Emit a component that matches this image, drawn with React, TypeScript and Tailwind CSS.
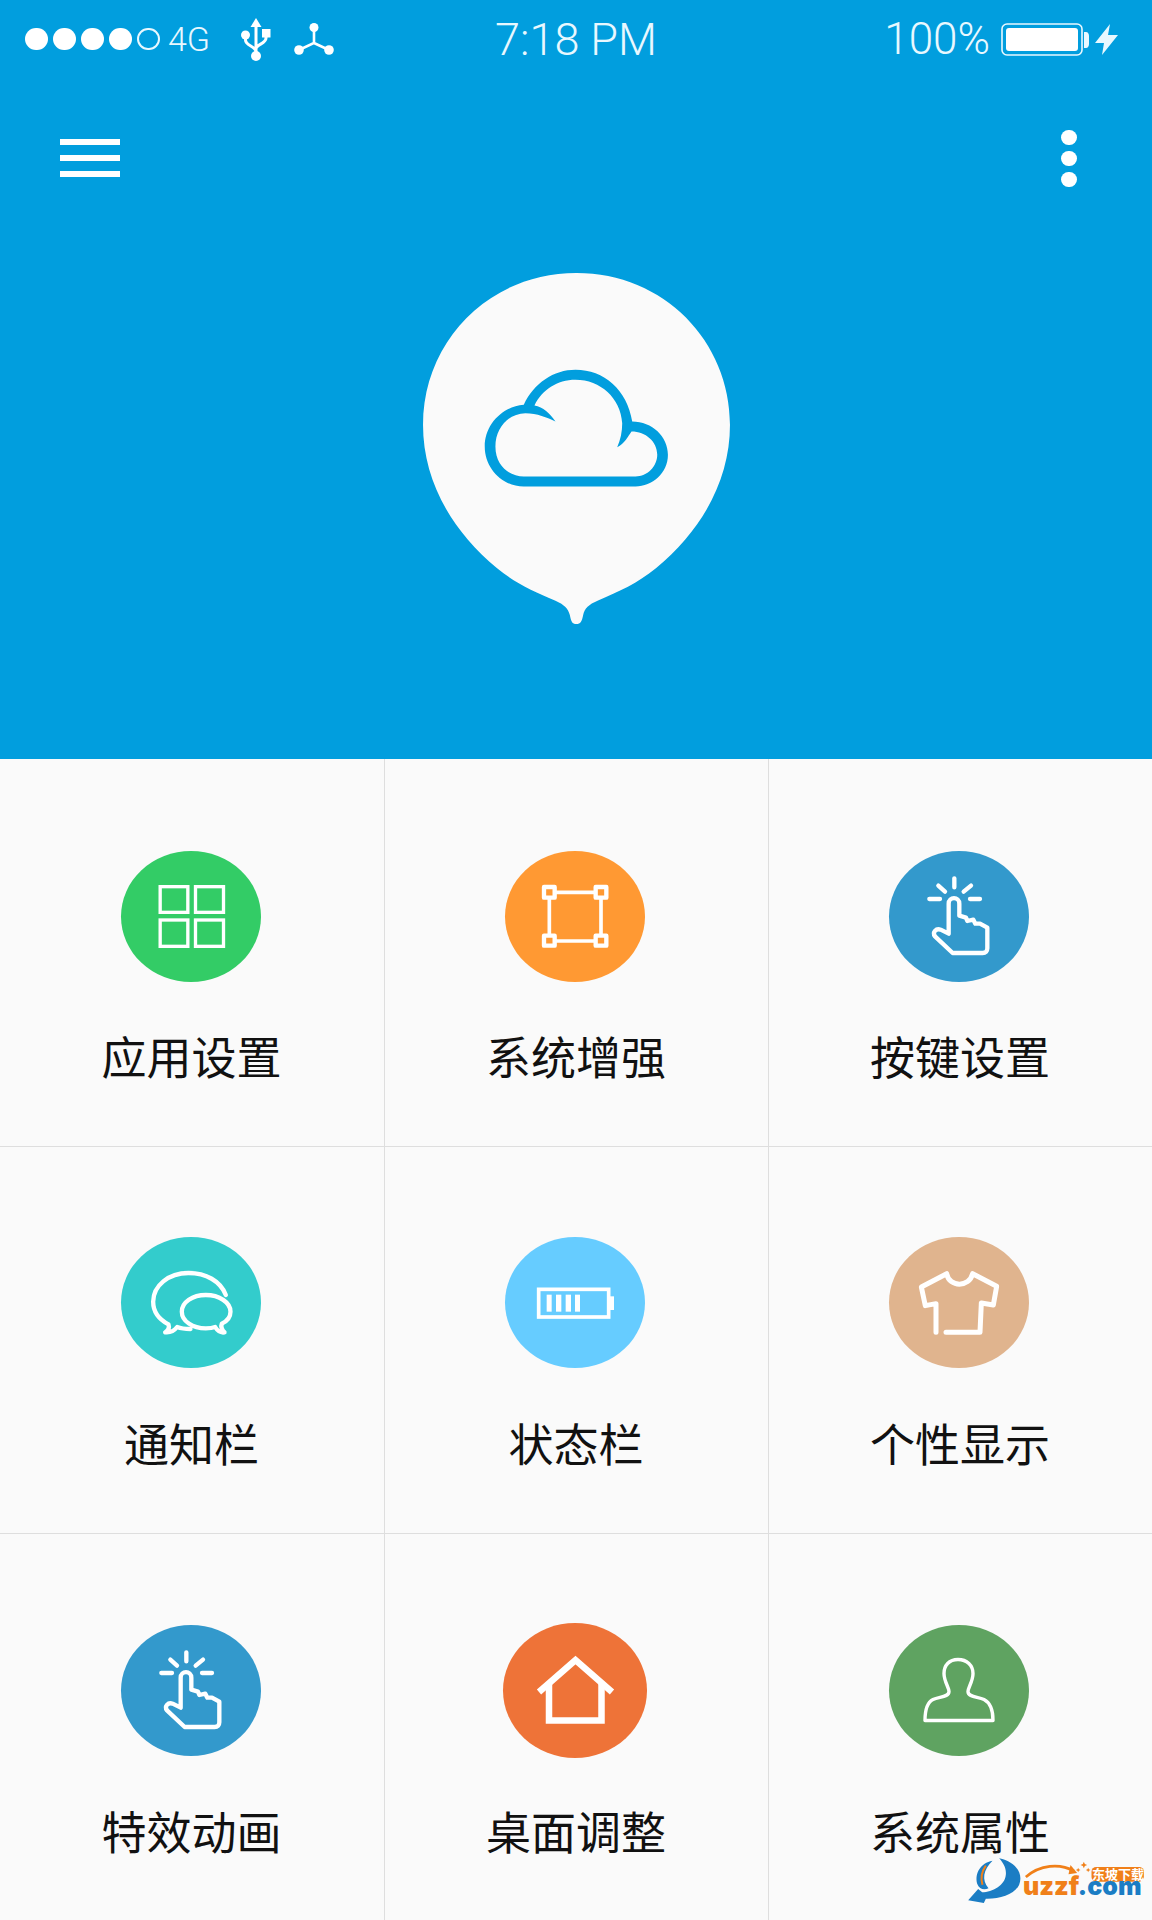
import type { ReactNode } from "react";

const GridIcon = () => (
  <svg viewBox="65 62 417 393" className="h-full w-full" fill="none" stroke="#fff" strokeWidth="10">
    <rect x="181" y="169" width="83" height="77" />
    <rect x="287" y="169" width="84" height="77" />
    <rect x="181" y="269" width="83" height="79" />
    <rect x="287" y="269" width="84" height="79" />
  </svg>
);

const FrameIcon = () => (
  <svg viewBox="45 62 420 393" className="h-full w-full" fill="none" stroke="#fff">
    <path d="M178 186H333V332H178Z" strokeWidth="11" />
    <g fill="#ff9933" strokeWidth="13" strokeLinejoin="round">
      <rect x="162" y="170" width="32" height="32" />
      <rect x="317" y="170" width="32" height="32" />
      <rect x="162" y="316" width="32" height="30" />
      <rect x="317" y="316" width="32" height="30" />
    </g>
  </svg>
);

const TapIcon = () => (
  <svg
    viewBox="57 62 420 393"
    className="h-full w-full"
    fill="none"
    stroke="#fff"
    strokeLinecap="round"
    strokeLinejoin="round"
    strokeWidth="13"
  >
    <path d="M253 144V171M205 166L225 184M303 166L281 184M178 206H210M300 206H330" />
    <path d="M236 310V220C236 198 268 198 268 220V256L288 262L292 272L310 268L316 280L330 280L352 292V354C352 362 347 368 338 368H248L195 318C186 306 198 293 212 298Z" />
  </svg>
);

const ChatIcon = () => (
  <svg
    viewBox="65 52 417 393"
    className="h-full w-full"
    fill="none"
    stroke="#fff"
    strokeLinecap="round"
    strokeLinejoin="round"
    strokeWidth="13"
  >
    <path d="M378 226C362 184 318 160 266 160C206 160 160 198 160 246C160 274 176 298 206 314C210 326 206 332 196 338C212 340 224 332 232 322C242 326 256 328 272 328" />
    <path d="M318 226C278 226 246 248 246 276C246 304 278 326 318 326C328 326 338 325 346 322C352 332 362 340 374 338C366 330 362 322 366 312C382 304 392 290 392 276C392 248 358 226 318 226Z" />
  </svg>
);

const BatteryIcon = () => (
  <svg viewBox="45 52 420 393" className="h-full w-full" fill="#fff">
    <rect x="146" y="209" width="210" height="83" fill="none" stroke="#fff" strokeWidth="11" />
    <rect x="360" y="230" width="12" height="41" />
    <rect x="170" y="225" width="15" height="51" />
    <rect x="198" y="225" width="16" height="51" />
    <rect x="227" y="225" width="16" height="51" />
    <rect x="255" y="225" width="15" height="51" />
  </svg>
);

const ShirtIcon = () => (
  <svg
    viewBox="57 52 420 393"
    className="h-full w-full"
    fill="none"
    stroke="#fff"
    strokeLinecap="round"
    strokeLinejoin="round"
    strokeWidth="15"
  >
    <path d="M198 338V252L166 258L154 202L230 162C238 204 298 204 308 162L380 200L370 256L334 250L330 338H228" />
  </svg>
);

const HomeIcon = () => (
  <svg viewBox="0 0 144 135" className="h-full w-full" fill="none" stroke="#fff" strokeWidth="6.5">
    <path d="M36 69L72.5 37L109 69" />
    <path d="M46 60V97.5H98.5V60" />
  </svg>
);

const PersonIcon = () => (
  <svg viewBox="0 0 140 130" className="h-full w-full" fill="none" stroke="#fff" strokeWidth="3.4" strokeLinejoin="round">
    <path d="M69 34C60 34 55 40 55 48C55 56 60 62 60 66C60 72 50 71 44 74C38 77 36 84 36 95H104C104 84 101 77 95 74C89 71 79 72 79 66C79 62 84 56 84 48C84 40 78 34 69 34Z" />
  </svg>
);

type Item = { label: string; circle: string; icon: ReactNode };

const items: Item[] = [
  { label: "应用设置", circle: "h-[131px] w-[140px] bg-[#33cc66]", icon: <GridIcon /> },
  { label: "系统增强", circle: "h-[131px] w-[140px] bg-[#ff9933]", icon: <FrameIcon /> },
  { label: "按键设置", circle: "h-[131px] w-[140px] bg-[#3399cc]", icon: <TapIcon /> },
  { label: "通知栏", circle: "h-[131px] w-[140px] bg-[#33cccc]", icon: <ChatIcon /> },
  { label: "状态栏", circle: "h-[131px] w-[140px] bg-[#66ccff]", icon: <BatteryIcon /> },
  { label: "个性显示", circle: "h-[131px] w-[140px] bg-[#e0b48e]", icon: <ShirtIcon /> },
  { label: "特效动画", circle: "h-[131px] w-[140px] bg-[#3399cc]", icon: <TapIcon /> },
  { label: "桌面调整", circle: "h-[135px] w-[144px] bg-[#ee7338]", icon: <HomeIcon /> },
  { label: "系统属性", circle: "h-[131px] w-[140px] bg-[#5fa361]", icon: <PersonIcon /> },
];

function StatusBar() {
  return (
    <div className="flex h-[78px] items-center font-['Roboto',sans-serif] font-light text-[#e8f8ff]">
      <div className="flex flex-1 items-center pl-[25px]">
        <div className="flex gap-[5px]">
          <span className="h-[22px] w-[23px] rounded-full bg-white" />
          <span className="h-[22px] w-[23px] rounded-full bg-white" />
          <span className="h-[22px] w-[23px] rounded-full bg-white" />
          <span className="h-[22px] w-[23px] rounded-full bg-white" />
          <span className="h-[22px] w-[23px] rounded-full border-2 border-[#e8f8ff]" />
        </div>
        <span className="ml-[8px] text-[34px] leading-none">4G</span>
        <svg viewBox="0 0 30 43" className="ml-[31px] h-[43px] w-[30px]" fill="#fff">
          <path d="M15 0L9.5 9H20.5Z" />
          <circle cx="15" cy="38" r="5" />
          <circle cx="4.5" cy="17" r="4.5" />
          <rect x="21" y="11" width="8.5" height="8.5" />
          <path d="M15 6V36M4.5 18V22C4.5 28 15 28 15 34M25 18V20C25 26 15 26 15 31" fill="none" stroke="#fff" strokeWidth="3" />
        </svg>
        <svg viewBox="0 0 40 32" className="ml-[23px] h-[32px] w-[40px]" fill="#fff">
          <circle cx="20" cy="4.5" r="4.5" />
          <circle cx="5" cy="27" r="4.8" />
          <circle cx="35" cy="27" r="4.8" />
          <path d="M20 6V20L5 27M20 20L35 27" fill="none" stroke="#fff" strokeWidth="2.6" />
        </svg>
      </div>
      <span className="ml-[9px] text-[45px] leading-none">7:18 PM</span>
      <div className="flex flex-1 items-center justify-end pr-[34px]">
        <span className="mr-[11px] text-[44px] leading-none">100%</span>
        <svg viewBox="0 0 88 33" className="h-[33px] w-[88px]">
          <rect x="1" y="1" width="80" height="31" rx="5" fill="none" stroke="#e8f8ff" strokeWidth="1.6" />
          <rect x="5" y="5" width="72" height="23" rx="3" fill="#fff" />
          <path d="M83 9H85C87 9 88 11 88 13V21C88 23 87 25 85 25H83Z" fill="#e8f8ff" />
        </svg>
        <svg viewBox="0 0 23 31" className="ml-[6px] h-[31px] w-[23px]" fill="#e8f8ff">
          <path d="M15 0L0 19H9L7 31L23 11H13Z" />
        </svg>
      </div>
    </div>
  );
}

function Toolbar() {
  return (
    <div className="flex h-[160px] items-center justify-between pl-[60px] pr-[75px]">
      <div className="flex flex-col gap-[10px]">
        <span className="h-[6px] w-[60px] bg-white" />
        <span className="h-[6px] w-[60px] bg-white" />
        <span className="h-[6px] w-[60px] bg-white" />
      </div>
      <div className="mt-[1px] flex flex-col gap-[6px]">
        <span className="h-[15px] w-[16px] rounded-full bg-white" />
        <span className="h-[15px] w-[16px] rounded-full bg-white" />
        <span className="h-[15px] w-[16px] rounded-full bg-white" />
      </div>
    </div>
  );
}

function Bubble() {
  return (
    <svg viewBox="68 70 920 1052" className="mx-auto mt-[35px] h-[351px] w-[307px]">
      <path
        fill="#fafafa"
        d="M528 70C790 70 988 275 988 525C988 690 905 840 766 955C711 1000 656 1025 591 1052C565 1063 552 1075 548 1095C544 1115 540 1122 528 1122C515 1122 512 1115 508 1095C503 1075 490 1063 465 1052C400 1025 345 1000 290 955C151 840 68 690 68 525C68 275 265 70 528 70Z"
      />
      <path
        fill="#019ede"
        fillRule="evenodd"
        d="M370 465C400 400 460 360 525 360C610 360 680 420 695 515C755 515 802 560 802 615C802 670 755 710 705 710H370C305 710 253 655 253 590C253 525 305 470 370 465ZM285 590C285 650 330 680 370 680H705C740 680 770 650 770 615C770 575 735 545 693 545C682 560 672 582 650 592C660 570 665 545 665 520C660 445 600 390 525 390C470 390 425 420 402 467C428 472 448 490 465 515C440 503 410 490 375 490C325 490 285 535 285 590Z"
      />
    </svg>
  );
}

function Watermark() {
  return (
    <div className="absolute bottom-[17px] right-[7px] h-[45px] w-[177px] font-['Inter',sans-serif] font-black">
      <svg viewBox="55 85 530 135" className="absolute inset-0 h-full w-full">
        <path
          fill="#1b7dc4"
          d="M148 86C195 95 222 130 208 165C195 195 150 208 108 207L102 220L55 212L85 178L97 188C128 186 165 168 168 135C170 115 160 100 148 86Z"
        />
        <path fill="#1b7dc4" d="M128 93C92 100 74 130 82 162C88 178 102 182 116 176C95 150 100 120 128 93Z" />
        <path d="M108 108C96 125 92 145 98 165" fill="none" stroke="#f08019" strokeWidth="6" />
        <path d="M228 142C270 105 330 100 372 124" fill="none" stroke="#f08019" strokeWidth="8" />
        <path d="M382 130L362 106L356 134Z" fill="#f08019" />
        <path
          fill="#f08019"
          d="M402 96L405 103L412 106L405 109L402 116L399 109L392 106L399 103ZM385 114L387 119L392 121L387 123L385 128L383 123L378 121L383 119ZM415 114L417 119L422 121L417 123L415 128L413 123L408 121L413 119Z"
        />
        <rect x="425" y="112" width="157" height="44" rx="14" fill="#f08019" />
      </svg>
      <span className="absolute left-[124px] top-[8px] whitespace-nowrap font-['Noto_Sans_CJK_SC',sans-serif] text-[13px] font-bold leading-[15px] text-white">
        东坡下载
      </span>
      <span className="absolute left-[55px] top-[23px] whitespace-nowrap text-[25px] leading-[10px]">
        <span className="text-[#f08019]">uzzf</span>
        <span className="text-[#1b7dc4]">.com</span>
      </span>
    </div>
  );
}

export default function App() {
  return (
    <div className="relative h-[1920px] w-[1152px] overflow-hidden bg-[#fafafa]">
      <header className="h-[759px] bg-[#019ede]">
        <StatusBar />
        <Toolbar />
        <Bubble />
      </header>
      <div className="grid grid-cols-[385px_384px_383px] grid-rows-[388px_387px_386px]">
        {items.map((item, i) => (
          <div
            key={item.label}
            className={
              "flex flex-col items-center border-[#dedede] pr-[3px] " +
              (i % 3 < 2 ? "border-r " : "") +
              (i < 6 ? "border-b " : "") +
              (i < 3 ? "pt-[92px]" : i < 6 ? "pt-[90px]" : "pt-[91px]")
            }
          >
            <div className="flex h-[131px] items-center justify-center">
              <div className={"shrink-0 rounded-[50%] " + item.circle}>{item.icon}</div>
            </div>
            <span
              className={
                "ml-[2px] font-['Noto_Sans_CJK_SC',sans-serif] text-[45px] leading-[52px] text-[#111111] " +
                (i < 3 ? "mt-[48px]" : "mt-[49px]")
              }
            >
              {item.label}
            </span>
          </div>
        ))}
      </div>
      <Watermark />
    </div>
  );
}
